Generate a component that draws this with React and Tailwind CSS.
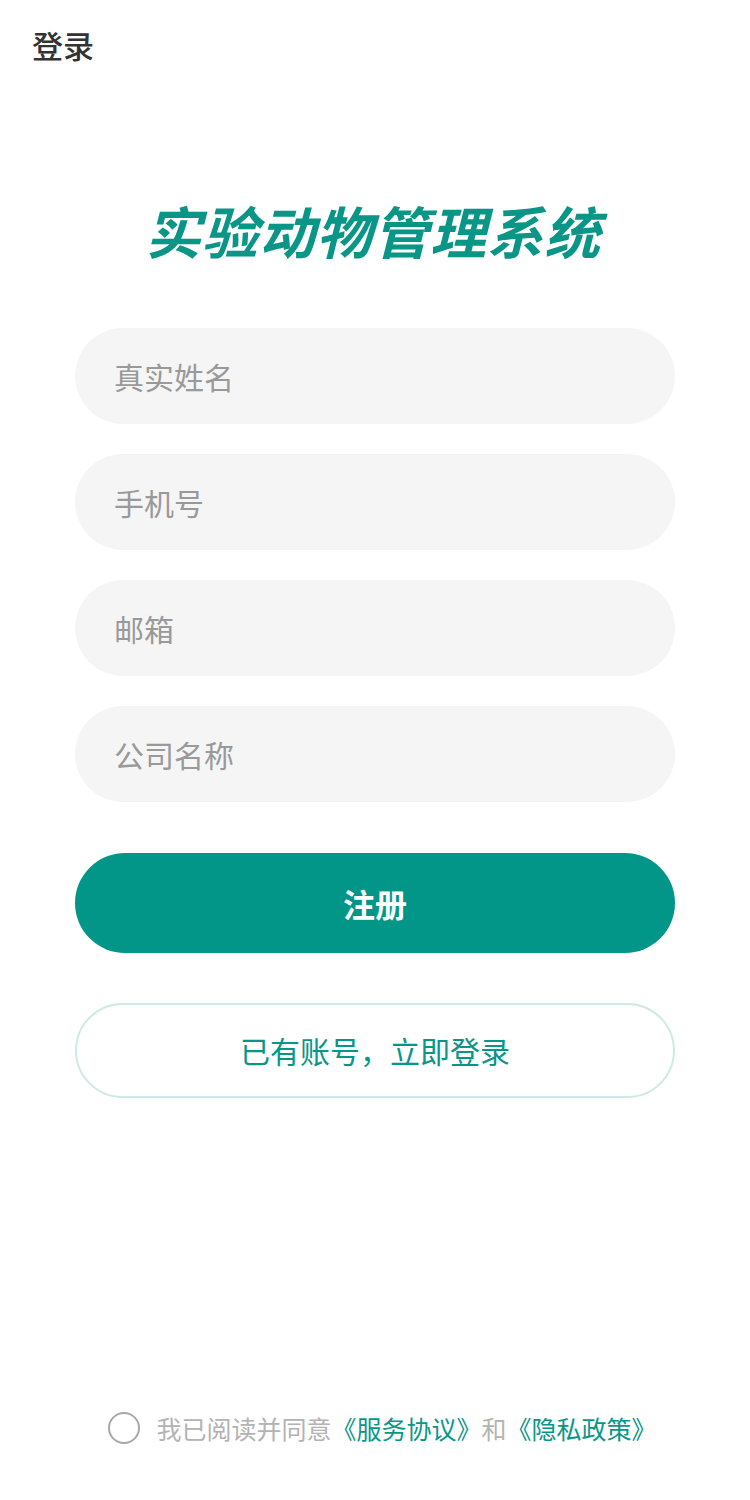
const FONT = { fontFamily: '"Noto Sans CJK SC", "Noto Sans", sans-serif' };

const FIELDS = ['真实姓名', '手机号', '邮箱', '公司名称'];

export default function App() {
  return (
    <div className="w-[750px] h-[1500px] bg-white flex flex-col" style={FONT}>
      <div className="px-8 pt-[27px] h-[80px]">
        <span className="text-[31px] leading-[36px] font-medium text-[#333333]">登录</span>
      </div>

      <h1 className="mt-[122px] pr-[4px] text-center text-[56px] leading-[56px] font-bold italic text-[#0a9686] tracking-[1px]">
        实验动物管理系统
      </h1>

      <div className="mt-[70px] px-[75px] flex flex-col gap-[30px]">
        {FIELDS.map((f) => (
          <input
            key={f}
            placeholder={f}
            className="h-[96px] w-full rounded-full bg-[#f5f5f5] pl-[39px] pr-8 text-[30px] text-[#333] placeholder:text-[#999999] outline-none"
            style={FONT}
          />
        ))}
      </div>

      <div className="mt-[51px] px-[75px] flex flex-col gap-[50px]">
        <button
          className="h-[100px] w-full rounded-full bg-[#029688] text-white text-[32px] font-bold"
          style={FONT}
        >
          注册
        </button>
        <button
          className="h-[95px] w-full rounded-full border-2 border-[#cfe9e6] bg-white text-[#0a9686] text-[30px]"
          style={FONT}
        >
          已有账号，立即登录
        </button>
      </div>

      <div className="mt-auto mb-[56px] pl-[15px] flex items-center justify-center gap-[16px]">
        <span className="w-[32px] h-[32px] rounded-full border-2 border-[#a8a8a8]" />
        <p className="text-[25px] leading-[32px] text-[#b3b3b3]">
          我已阅读并同意<span className="text-[#0a9686]">《服务协议》</span>和<span className="text-[#0a9686]">《隐私政策》</span>
        </p>
      </div>
    </div>
  );
}
